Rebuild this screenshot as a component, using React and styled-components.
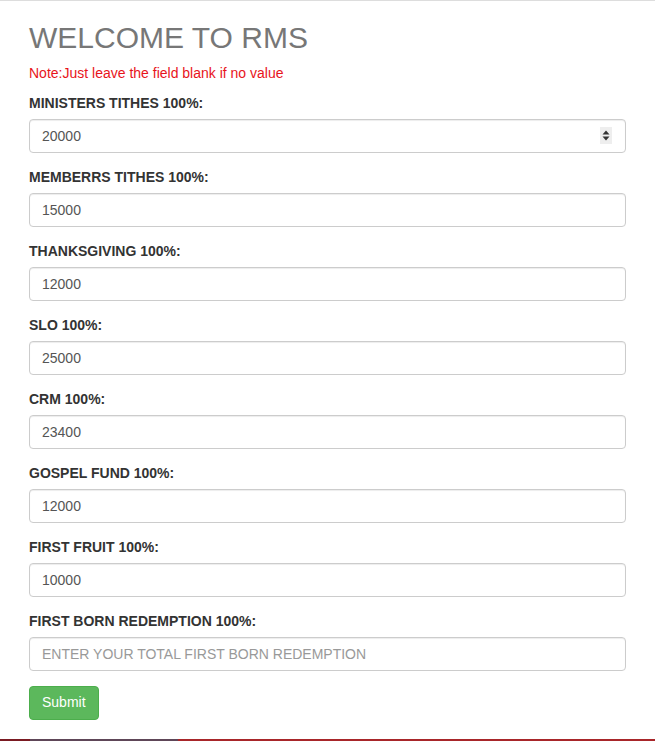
import React from "react";
import styled, { createGlobalStyle } from "styled-components";

const Global = createGlobalStyle`
  html, body { margin: 0; padding: 0; background: #fff; }
  body {
    font-family: "Liberation Sans", Arial, sans-serif;
    font-size: 14px;
    line-height: 1.42857;
    color: #333;
    border-top: 1px solid #ddd;
    min-height: 741px;
    box-sizing: border-box;
    display: flex;
    flex-direction: column;
  }
  #root { flex: 1; display: flex; flex-direction: column; }
  * { box-sizing: border-box; }
`;

const Page = styled.div`
  flex: 1;
  display: flex;
  flex-direction: column;
`;

const Container = styled.div`
  padding: 0 29px;
  flex: 1;
`;

const Title = styled.h2`
  margin: 20px 0 10px;
  font-size: 30px;
  font-weight: 400;
  line-height: 1.1;
  color: #777;
`;

const Note = styled.p`
  margin: 0 0 10px;
  color: #e8141b;
`;

const Group = styled.div`
  margin-bottom: 15px;
  display: flex;
  flex-direction: column;
`;

const Label = styled.label`
  display: block;
  margin-bottom: 5px;
  font-weight: 700;
  color: #333;
  height: 20px;
`;

const Field = styled.div`
  position: relative;
`;

const Input = styled.input`
  display: block;
  width: 100%;
  height: 34px;
  padding: 6px 12px;
  font-family: "Liberation Sans", Arial, sans-serif;
  font-size: 14px;
  line-height: 1.42857;
  color: #555;
  background: #fff;
  border: 1px solid #ccc;
  border-radius: 4px;
  box-shadow: inset 0 1px 1px rgba(0, 0, 0, 0.075);
  outline: none;
  &::placeholder { color: #999; }
`;

const Spinner = styled.span`
  position: absolute;
  right: 14px;
  top: 8px;
  width: 12px;
  height: 17px;
  background: #eee;
  display: flex;
  align-items: center;
  justify-content: center;
`;

const Button = styled.button`
  display: inline-block;
  height: 34px;
  padding: 6px 12px;
  font-family: "Liberation Sans", Arial, sans-serif;
  font-size: 14px;
  line-height: 1.42857;
  color: #fff;
  background: #5cb85c;
  border: 1px solid #4cae4c;
  border-radius: 4px;
  cursor: pointer;
`;

const Footer = styled.div`
  height: 2px;
  display: flex;
  background: #a8262a;
`;

const FooterSeg = styled.div`
  width: ${(p) => p.$w}px;
  background: ${(p) => p.$c};
`;

const fields = [
  { label: "MINISTERS TITHES 100%:", value: "20000", spin: true },
  { label: "MEMBERRS TITHES 100%:", value: "15000" },
  { label: "THANKSGIVING 100%:", value: "12000" },
  { label: "SLO 100%:", value: "25000" },
  { label: "CRM 100%:", value: "23400" },
  { label: "GOSPEL FUND 100%:", value: "12000" },
  { label: "FIRST FRUIT 100%:", value: "10000" },
  {
    label: "FIRST BORN REDEMPTION 100%:",
    value: "",
    placeholder: "ENTER YOUR TOTAL FIRST BORN REDEMPTION",
  },
];

export default function App() {
  return (
    <Page>
      <Global />
      <Container>
        <Title>WELCOME TO RMS</Title>
        <Note>Note:Just leave the field blank if no value</Note>
        {fields.map((f, i) => (
          <Group key={i}>
            <Label>{f.label}</Label>
            <Field>
              <Input defaultValue={f.value} placeholder={f.placeholder} type="text" />
              {f.spin && (
                <Spinner>
                  <svg width="8" height="11" viewBox="0 0 8 11">
                    <path d="M4 0.5 L7.5 4.5 H0.5 Z" fill="#333" />
                    <path d="M4 10.5 L7.5 6.5 H0.5 Z" fill="#333" />
                  </svg>
                </Spinner>
              )}
            </Field>
          </Group>
        ))}
        <Button type="button">Submit</Button>
      </Container>
      <Footer>
        <FooterSeg $w={30} $c="#7a1a22" />
        <FooterSeg $w={148} $c="#5e4658" />
      </Footer>
    </Page>
  );
}
